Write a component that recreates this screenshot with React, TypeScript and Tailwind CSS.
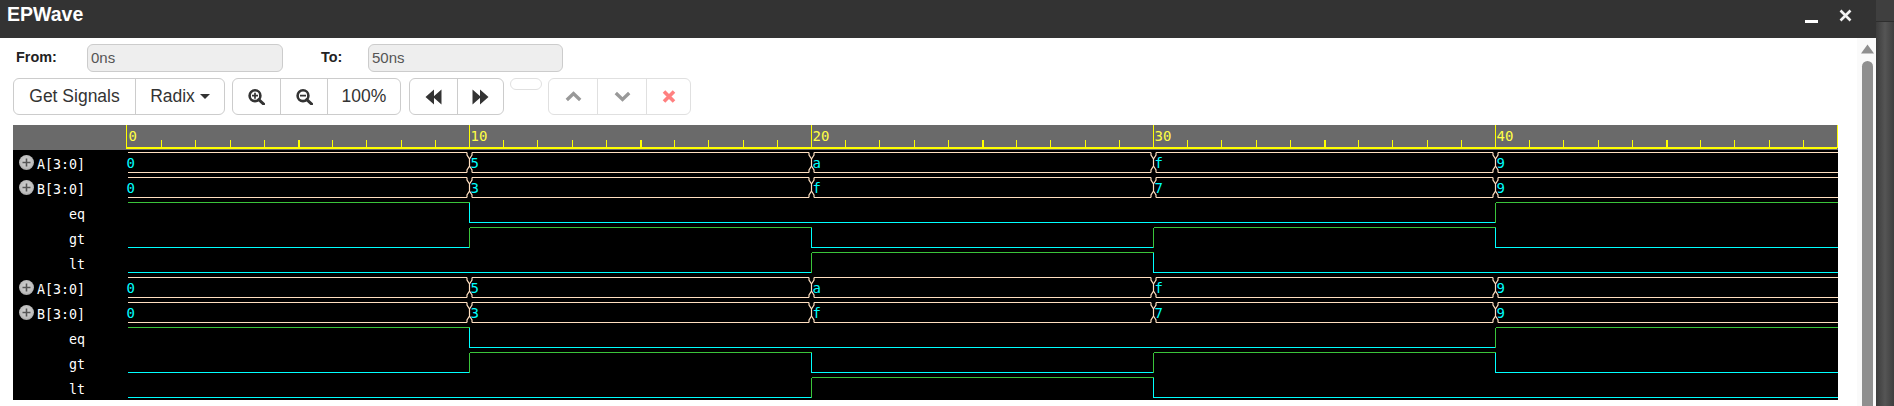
import React from "react";

const MONO = "font-['DejaVu_Sans_Mono',monospace]";

const X0 = 342.0; // px per 10 time units
const T = (t: number) => 1.5 + (t / 10) * X0;

function Plus() {
  return (
    <svg width="15" height="15" viewBox="0 0 15 15" className="shrink-0">
      <defs>
        <radialGradient id="pg" cx="50%" cy="45%" r="60%">
          <stop offset="0%" stopColor="#d8d8d8" />
          <stop offset="70%" stopColor="#bdbdbd" />
          <stop offset="100%" stopColor="#9a9a9a" />
        </radialGradient>
      </defs>
      <circle cx="7.5" cy="7.5" r="7.5" fill="url(#pg)" />
      <path d="M7.5 3.5v8M3.5 7.5h8" stroke="#555" strokeWidth="1.6" />
    </svg>
  );
}

const ZoomIcon = ({ plus }: { plus: boolean }) => (
  <svg width="17" height="16" viewBox="0 0 17 16">
    <circle cx="7" cy="6.7" r="5.4" fill="none" stroke="#333" strokeWidth="2.6" />
    <path d="M10.8 10.6 15.6 15" stroke="#333" strokeWidth="3" strokeLinecap="round" />
    <path d={plus ? "M4 6.7h6M7 3.7v6" : "M4 6.7h6"} stroke="#333" strokeWidth="1.7" />
  </svg>
);

const Back = ({ flip }: { flip?: boolean }) => (
  <svg width="17" height="16" viewBox="0 0 17 16" className={flip ? "-scale-x-100" : ""}>
    <path d="M9 0.5V15.5L0.5 8Z M16.5 0.5V15.5L8 8Z" fill="#333" />
  </svg>
);

const Chevron = ({ down }: { down?: boolean }) => (
  <svg width="17" height="11" viewBox="0 0 17 11" className={down ? "rotate-180" : ""}>
    <path d="M1.8 9 8.5 2.6 15.2 9" fill="none" stroke="#999" strokeWidth="3.4" />
  </svg>
);

function Toolbar() {
  const seg = "h-full flex items-center justify-center border-l border-[#ccc] first:border-l-0";
  const group = "flex h-[37px] border border-[#ccc] rounded-md bg-white text-[#333] text-[17.5px] overflow-hidden";
  return (
    <div className="flex items-start ml-[13px] mt-[6px]">
      <div className={`${group} w-[212px] mr-[7px]`}>
        <div className={`${seg} w-[121px]`}>Get Signals</div>
        <div className={`${seg} flex-1 gap-[5px]`}>
          Radix
          <span className="w-0 h-0 border-x-[5.5px] border-x-transparent border-t-[5.5px] border-t-[#333]" />
        </div>
      </div>
      <div className={`${group} w-[169px] mr-[8px]`}>
        <div className={`${seg} w-[47px]`}><ZoomIcon plus /></div>
        <div className={`${seg} w-[47px]`}><ZoomIcon plus={false} /></div>
        <div className={`${seg} flex-1`}>100%</div>
      </div>
      <div className={`${group} w-[95px] mr-[6px]`}>
        <div className={`${seg} w-[47px]`}><Back /></div>
        <div className={`${seg} flex-1`}><Back flip /></div>
      </div>
      <div className="w-[32px] h-[12px] border border-[#e0e0e0] rounded-md mr-[6px]" />
      <div className="flex h-[37px] w-[143px] border border-[#e0e0e0] rounded-md overflow-hidden">
        <div className="w-[48px] flex items-center justify-center"><Chevron /></div>
        <div className="w-[49px] flex items-center justify-center border-l border-[#e0e0e0]"><Chevron down /></div>
        <div className="flex-1 flex items-center justify-center border-l border-[#e0e0e0]">
          <svg width="14" height="13" viewBox="0 0 14 13">
            <path d="M2 1.5 12 11.5M12 1.5 2 11.5" stroke="#ff8080" strokeWidth="3.6" />
          </svg>
        </div>
      </div>
    </div>
  );
}

function RangeRow() {
  const input = "h-[28px] border border-[#ccc] rounded-md bg-[#eee] text-[#555] text-[15px] pl-[3px] flex items-center";
  const label = "font-bold text-[14.4px] text-[#222]";
  return (
    <div className="flex items-center ml-[16px] mt-[6px]">
      <span className={`${label} w-[71px]`}>From:</span>
      <div className={`${input} w-[196px] mr-[38px]`}>0ns</div>
      <span className={`${label} w-[47px]`}>To:</span>
      <div className={`${input} w-[195px]`}>50ns</div>
    </div>
  );
}

function Ruler() {
  const ticks = Array.from({ length: 50 }, (_, i) => i);
  return (
    <svg width="1712" height="25" viewBox="0 0 1712 25" shapeRendering="crispEdges" className="block">
      <rect x="0" y="22" width="1711" height="1.5" fill="#ffff00" />
      <rect x="1711" y="0" width="1" height="23" fill="#ffff00" />
      {ticks.map((i) => {
        if (i % 10 === 0) return <rect key={i} x={i === 0 ? 0 : T(i) - 0.5} y={0} width={1} height={23} fill="#ffff00" />;
        return <rect key={i} x={T(i) - 0.5} y={15} width={i % 5 === 0 ? 2 : 1} height={7} fill="#ffff00" />;
      })}
      {[0, 10, 20, 30, 40].map((t) => (
        <text key={t} x={T(t) + 1} y={15.5} fill="#ffff44" fontSize="14" fontFamily="'DejaVu Sans Mono', monospace" shapeRendering="auto">
          {t}
        </text>
      ))}
    </svg>
  );
}

const BUS_A = ["0", "5", "a", "f", "9"];
const BUS_B = ["0", "3", "f", "7", "9"];

function Bus({ y, values }: { y: number; values: string[] }) {
  const top = y + 2.5;
  const bot = y + 22.5;
  const color = "#ffdfc0";
  return (
    <g>
      {values.map((v, i) => {
        const a = i === 0 ? 2 : T(i * 10) + 2.5;
        const b = i === 4 ? 1712 : T((i + 1) * 10) - 2.5;
        return (
          <g key={i}>
            <path d={`M${a} ${top}H${b}M${a} ${bot}H${b}`} stroke={color} strokeWidth="1" fill="none" shapeRendering="crispEdges" />
            <text x={i === 0 ? 0.5 : T(i * 10) + 1} y={y + 18} fill="#00ffff" fontSize="14" fontFamily="'DejaVu Sans Mono', monospace">
              {v}
            </text>
          </g>
        );
      })}
      {[10, 20, 30, 40].map((t) => {
        const x = T(t);
        return (
          <path
            key={t}
            d={`M${x - 2.5} ${top}V${y + 5}L${x} ${y + 9}V${y + 16}L${x - 2.5} ${y + 20}V${bot}M${x + 2.5} ${top}V${y + 5}L${x} ${y + 9}M${x + 2.5} ${bot}V${y + 20}L${x} ${y + 16}`}
            stroke={color}
            strokeWidth="1.2"
            fill="none"
          />
        );
      })}
    </g>
  );
}

function Bit({ y, levels }: { y: number; levels: number[] }) {
  const hi = y + 2.5;
  const lo = y + 22.5;
  return (
    <g shapeRendering="crispEdges">
      {levels.map((l, i) => {
        const a = i === 0 ? 2 : T(i * 10);
        const b = i === 4 ? 1712 : T((i + 1) * 10);
        const yy = l ? hi : lo;
        const prev = levels[i - 1];
        return (
          <g key={i}>
            <path d={`M${a} ${yy}H${b}`} stroke={l ? "#3ac43a" : "#00ffff"} strokeWidth="1" />
            {i > 0 && prev !== l && <path d={`M${a} ${hi}V${lo}`} stroke={l ? "#3ac43a" : "#00ffff"} strokeWidth="1" />}
          </g>
        );
      })}
    </g>
  );
}

const EQ = [1, 0, 0, 0, 1];
const GT = [0, 1, 0, 1, 0];
const LT = [0, 0, 1, 0, 0];

const ROWS = [
  { name: "A[3:0]", bus: true },
  { name: "B[3:0]", bus: true },
  { name: "eq", bus: false },
  { name: "gt", bus: false },
  { name: "lt", bus: false },
];

function Waves() {
  return (
    <svg width="1712" height="250" viewBox="0 0 1712 250" className="block">
      {[0, 125].map((o) => (
        <g key={o}>
          <Bus y={o} values={BUS_A} />
          <Bus y={o + 25} values={BUS_B} />
          <Bit y={o + 50} levels={EQ} />
          <Bit y={o + 75} levels={GT} />
          <Bit y={o + 100} levels={LT} />
        </g>
      ))}
    </svg>
  );
}

function WavePanel() {
  const labels = [...ROWS, ...ROWS];
  return (
    <div className="ml-[13px] mt-[10px] w-[1825px] h-[275px] bg-black flex flex-col">
      <div className="h-[25px] bg-[#6a6a6a] pl-[113px] shrink-0">
        <Ruler />
      </div>
      <div className="flex">
        <div className={`w-[113px] shrink-0 pr-[41px] text-white text-[13.3px] ${MONO}`}>
          {labels.map((r, i) => (
            <div key={i} className="h-[25px] flex items-center justify-end gap-[3px] leading-none">
              {r.bus && <Plus />}
              <span className="pt-[5px]">{r.name}</span>
            </div>
          ))}
        </div>
        <Waves />
      </div>
    </div>
  );
}

export default function App() {
  return (
    <div className="w-[1894px] h-[406px] flex overflow-hidden bg-white font-['Liberation_Sans',Arial,sans-serif]">
      <div className="w-[1876px] flex flex-col shrink-0">
        <div className="h-[38px] bg-[#333] shrink-0 flex items-start justify-between text-white">
          <span className="font-bold text-[19.5px] leading-none ml-[7px] mt-[5px]">EPWave</span>
          <div className="flex items-start mr-[24px]">
            <div className="w-[13px] h-[3px] bg-white mt-[20px] mr-[21px]" />
            <svg width="13" height="13" viewBox="0 0 13 13" className="mt-[9px]">
              <path d="M1.5 1.5 11.5 11.5M11.5 1.5 1.5 11.5" stroke="#f2f2f2" strokeWidth="2.6" />
            </svg>
          </div>
        </div>
        <div className="flex-1 flex min-h-0">
          <div className="w-[1857px] shrink-0">
            <RangeRow />
            <Toolbar />
            <WavePanel />
          </div>
          <div className="w-[19px] bg-[#fafafa] flex flex-col items-center pl-[1px]">
            <svg width="13" height="10" viewBox="0 0 13 10" className="mt-[6px] mb-[7px]">
              <path d="M6.5 0.5 13 9.5H0Z" fill="#8f8f8f" />
            </svg>
            <div className="w-[11px] flex-1 bg-[#8f8f8f] rounded-t-full" />
          </div>
        </div>
      </div>
      <div className="flex-1 flex flex-col">
        <div className="h-[22px] bg-[#3f3f3f] border-b border-[#2e2e2e]" />
        <div className="flex-1 bg-gradient-to-r from-[#3c3c3c] via-[#555] to-[#3e3e3e]" />
      </div>
    </div>
  );
}
